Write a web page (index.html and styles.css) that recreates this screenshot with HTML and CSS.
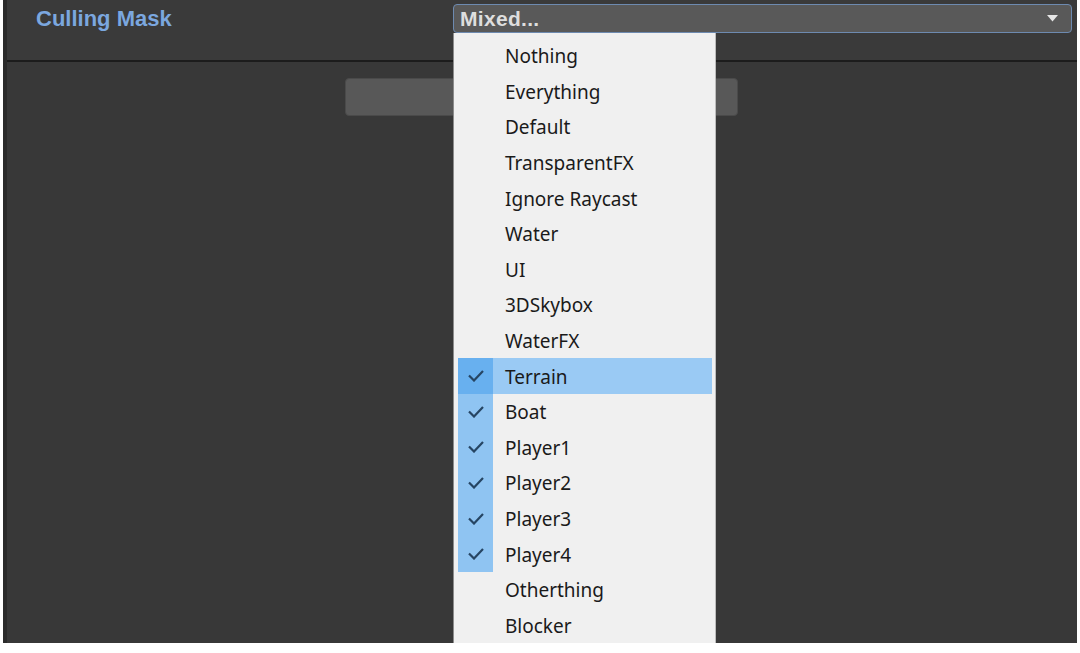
FILE: index.html
```html
<!DOCTYPE html>
<html>
<head>
<meta charset="utf-8">
<link rel="stylesheet" href="styles.css">
</head>
<body>
<div class="panel">
  <div class="header">
    <div class="label">Culling Mask</div>
    <div class="field">
      <span class="field-text">Mixed...</span>
      <svg class="arrow" width="11" height="7" viewBox="0 0 11 7"><polygon points="0,0 11,0 5.5,6.5" fill="#e6e6e6"/></svg>
    </div>
  </div>
  <div class="content">
    <div class="button"></div>
  </div>
  <div class="menu">
    <div class="item"><span class="check"></span><span class="name">Nothing</span></div>
    <div class="item"><span class="check"></span><span class="name">Everything</span></div>
    <div class="item"><span class="check"></span><span class="name">Default</span></div>
    <div class="item"><span class="check"></span><span class="name">TransparentFX</span></div>
    <div class="item"><span class="check"></span><span class="name">Ignore Raycast</span></div>
    <div class="item"><span class="check"></span><span class="name">Water</span></div>
    <div class="item"><span class="check"></span><span class="name">UI</span></div>
    <div class="item"><span class="check"></span><span class="name">3DSkybox</span></div>
    <div class="item"><span class="check"></span><span class="name">WaterFX</span></div>
    <div class="item checked hover"><span class="check"><svg width="16" height="12" viewBox="0 0 16 12"><polyline points="1,5.5 6,10.5 15,1" fill="none" stroke="#264563" stroke-width="2.2"/></svg></span><span class="name">Terrain</span></div>
    <div class="item checked"><span class="check"><svg width="16" height="12" viewBox="0 0 16 12"><polyline points="1,5.5 6,10.5 15,1" fill="none" stroke="#264563" stroke-width="2.2"/></svg></span><span class="name">Boat</span></div>
    <div class="item checked"><span class="check"><svg width="16" height="12" viewBox="0 0 16 12"><polyline points="1,5.5 6,10.5 15,1" fill="none" stroke="#264563" stroke-width="2.2"/></svg></span><span class="name">Player1</span></div>
    <div class="item checked"><span class="check"><svg width="16" height="12" viewBox="0 0 16 12"><polyline points="1,5.5 6,10.5 15,1" fill="none" stroke="#264563" stroke-width="2.2"/></svg></span><span class="name">Player2</span></div>
    <div class="item checked"><span class="check"><svg width="16" height="12" viewBox="0 0 16 12"><polyline points="1,5.5 6,10.5 15,1" fill="none" stroke="#264563" stroke-width="2.2"/></svg></span><span class="name">Player3</span></div>
    <div class="item checked"><span class="check"><svg width="16" height="12" viewBox="0 0 16 12"><polyline points="1,5.5 6,10.5 15,1" fill="none" stroke="#264563" stroke-width="2.2"/></svg></span><span class="name">Player4</span></div>
    <div class="item"><span class="check"></span><span class="name">Otherthing</span></div>
    <div class="item"><span class="check"></span><span class="name">Blocker</span></div>
  </div>
</div>
</body>
</html>
```
FILE: styles.css
```css
* { box-sizing: border-box; }
html, body { margin: 0; padding: 0; }
body {
  background: #ffffff;
  width: 1080px;
  height: 653px;
  overflow: hidden;
}
.panel {
  position: relative;
  margin-left: 3px;
  width: 1074px;
  height: 643px;
  background: #383838;
  border-left: 4px solid #2b2b2b;
}
.header {
  height: 62px;
  display: flex;
  align-items: flex-start;
  border-bottom: 2px solid #1c1c1c;
  background: #3a3a3a;
}
.label {
  width: 446px;
  padding-left: 29px;
  padding-top: 6px;
  font-family: "Liberation Sans", Arial, sans-serif;
  font-weight: bold;
  font-size: 22px;
  color: #7ba7df;
}
.field {
  margin-top: 4px;
  width: 619px;
  height: 29px;
  background: #595959;
  border: 1px solid #6d8ab0;
  border-radius: 4px;
  display: flex;
  align-items: center;
  justify-content: space-between;
  padding: 0 13px 0 6px;
}
.field-text {
  font-family: "Liberation Sans", Arial, sans-serif;
  font-weight: bold;
  font-size: 21px;
  color: #dedede;
  letter-spacing: 0.3px;
}
.arrow { display: block; }
.content {
  padding-top: 16px;
  padding-left: 338px;
}
.button {
  width: 393px;
  height: 38px;
  background: #585858;
  border: 1px solid #4a4a4a;
  border-radius: 4px;
}
.menu {
  position: absolute;
  left: 446px;
  top: 33px;
  width: 263px;
  height: 610px;
  background: #f0f0f0;
  border-left: 1px solid #8c8c8c;
  border-right: 1px solid #bcbcbc;
  padding: 5px 3px 0 4px;
  overflow: hidden;
}
.item {
  display: flex;
  align-items: center;
  height: 35.6px;
}
.check {
  width: 35px;
  height: 100%;
  display: flex;
  align-items: center;
  justify-content: center;
}
.check svg { display: block; }
.name {
  padding-left: 12px;
  padding-top: 1px;
  font-family: "Noto Sans", "Open Sans", sans-serif;
  font-size: 19px;
  color: #1a1a1a;
}
.item.checked .check { background: #8fc4f2; }
.item.hover { background: #9acaf4; }
.item.hover .check { background: #68b0ef; }
```
